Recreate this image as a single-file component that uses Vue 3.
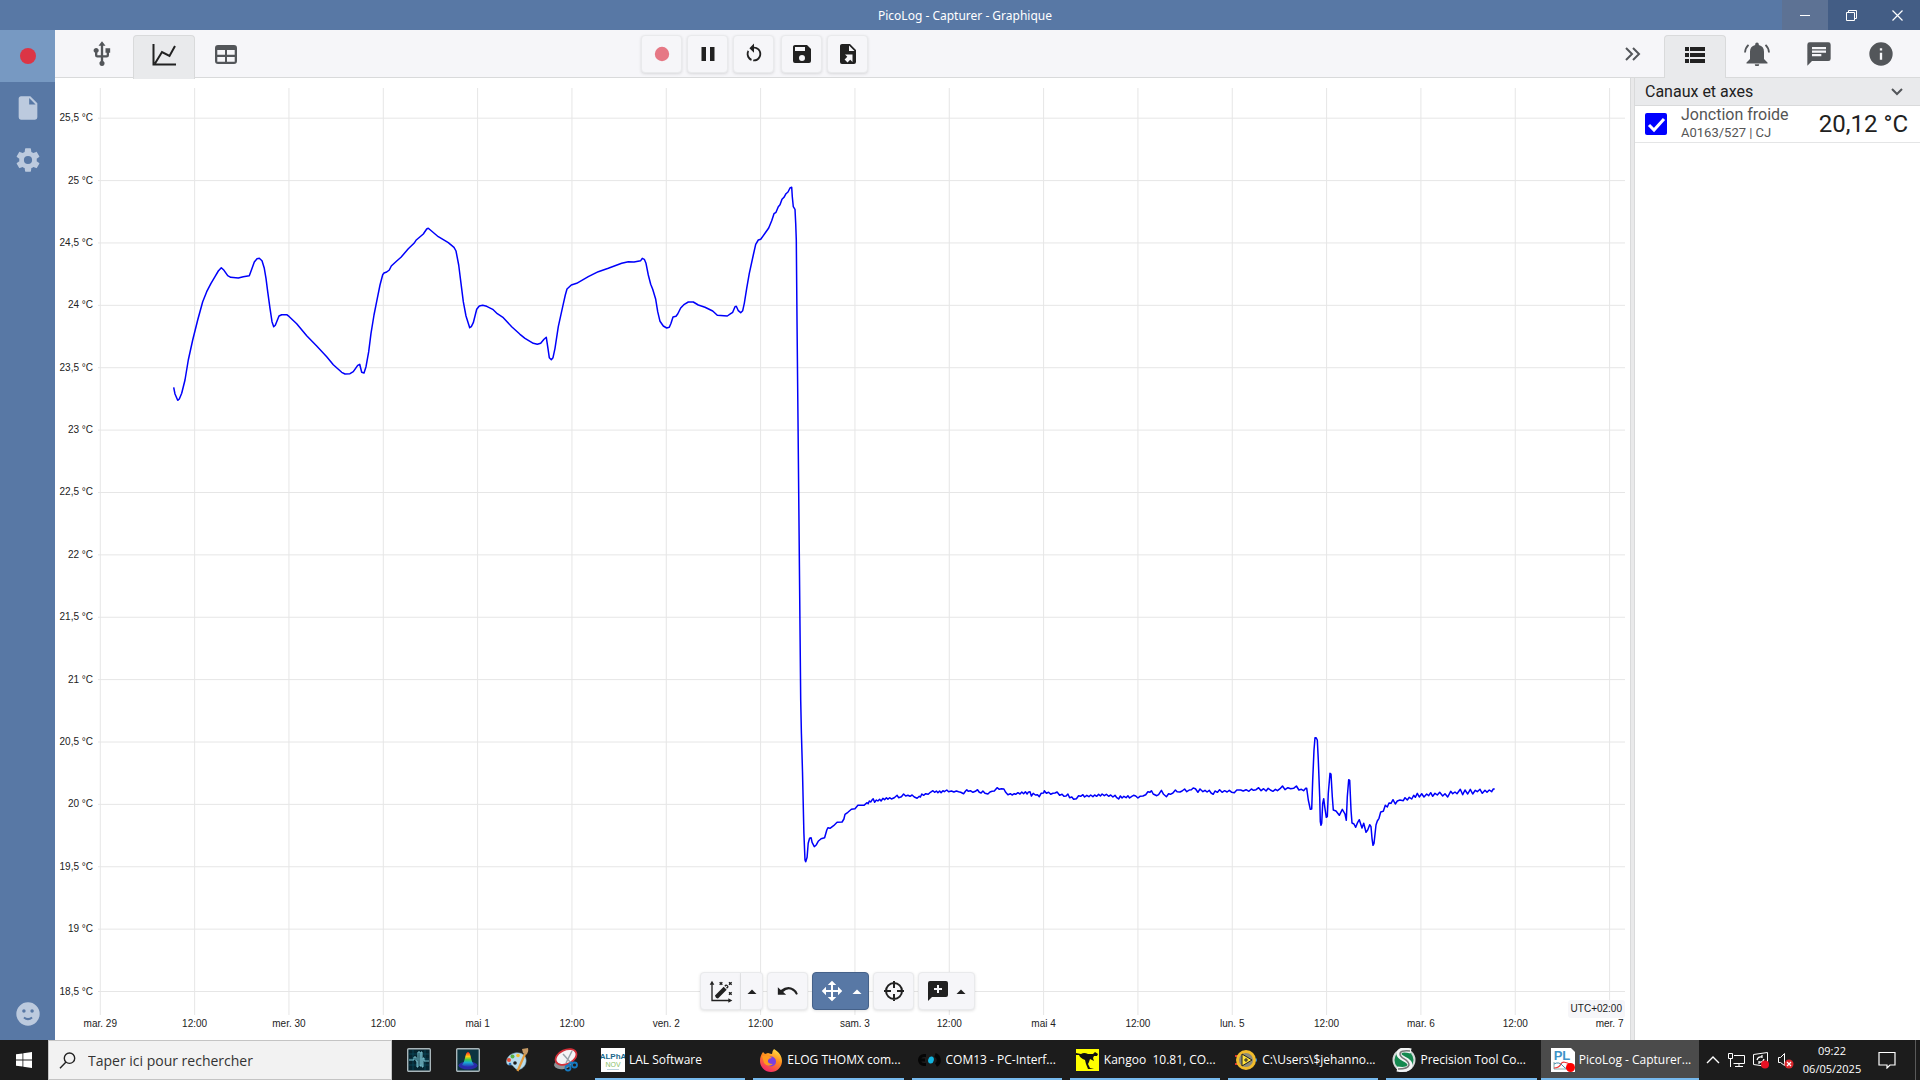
<script setup>
import { h, ref } from 'vue'

const icons = {
  usb: { w: 24, h: 24, d: 'M15,7V11H16V13H13V5H15L12,1L9,5H11V13H8V10.93C8.7,10.56 9.2,9.85 9.2,9C9.2,7.78 8.21,6.8 7,6.8C5.78,6.8 4.8,7.78 4.8,9C4.8,9.85 5.3,10.56 6,10.93V13A2,2 0 0,0 8,15H11V18.05C10.29,18.41 9.8,19.15 9.8,20A2.2,2.2 0 0,0 12,22.2A2.2,2.2 0 0,0 14.2,20C14.2,19.15 13.71,18.41 13,18.05V15H16A2,2 0 0,0 18,13V11H19V7H15Z' },
  file: { w: 24, h: 24, d: 'M13,9V3.5L18.5,9M6,2C4.89,2 4,2.89 4,4V20A2,2 0 0,0 6,22H18A2,2 0 0,0 20,20V8L14,2H6Z' },
  cog: { w: 24, h: 24, d: 'M12,15.5A3.5,3.5 0 0,1 8.5,12A3.5,3.5 0 0,1 12,8.5A3.5,3.5 0 0,1 15.5,12A3.5,3.5 0 0,1 12,15.5M19.43,12.97C19.47,12.65 19.5,12.33 19.5,12C19.5,11.67 19.47,11.34 19.43,11L21.54,9.37C21.73,9.22 21.78,8.95 21.66,8.73L19.66,5.27C19.54,5.05 19.27,4.96 19.05,5.05L16.56,6.05C16.04,5.66 15.5,5.32 14.87,5.07L14.5,2.42C14.46,2.18 14.25,2 14,2H10C9.75,2 9.54,2.18 9.5,2.42L9.13,5.07C8.5,5.32 7.96,5.66 7.44,6.05L4.95,5.05C4.73,4.96 4.46,5.05 4.34,5.27L2.34,8.73C2.21,8.95 2.27,9.22 2.46,9.37L4.57,11C4.53,11.34 4.5,11.67 4.5,12C4.5,12.33 4.53,12.65 4.57,12.97L2.46,14.63C2.27,14.78 2.21,15.05 2.34,15.27L4.34,18.73C4.46,18.95 4.73,19.03 4.95,18.95L7.44,17.94C7.96,18.34 8.5,18.68 9.13,18.93L9.5,21.58C9.54,21.82 9.75,22 10,22H14C14.25,22 14.46,21.82 14.5,21.58L14.87,18.93C15.5,18.67 16.04,18.34 16.56,17.94L19.05,18.95C19.27,19.03 19.54,18.95 19.66,18.73L21.66,15.27C21.78,15.05 21.73,14.78 21.54,14.63L19.43,12.97Z' },
  smile: { w: 24, h: 24, d: 'M12,2A10,10 0 1,0 12,22A10,10 0 1,0 12,2M8.5,8A1.5,1.5 0 1,1 8.5,11A1.5,1.5 0 1,1 8.5,8M15.5,8A1.5,1.5 0 1,1 15.5,11A1.5,1.5 0 1,1 15.5,8M8,15.6L9,14.4Q12,16.6 15,14.4L16,15.6Q12,19 8,15.6Z' },
  chart: { w: 24, h: 24, s: 'M1.5,1V21.5H24M3,20.5L10,9L17.5,13L23,3', sw: 2 },
  table: { w: 22, h: 19, d: 'M3,0H19A3,3 0 0,1 22,3V16A3,3 0 0,1 19,19H3A3,3 0 0,1 0,16V3A3,3 0 0,1 3,0M2.3,5V9.8H10V5M12,5V9.8H19.7V5M2.3,12V16.8H10V12M12,12V16.8H19.7V12Z' },
  record: { w: 20, h: 20, d: 'M10,2A8,8 0 1,0 10,18A8,8 0 1,0 10,2Z' },
  pause: { w: 24, h: 24, d: 'M5.5,5H10V19H5.5ZM14,5H18.5V19H14Z' },
  restart: { w: 24, h: 24, d: 'M12,4C14.1,4 16.1,4.8 17.6,6.3C20.7,9.4 20.7,14.5 17.6,17.6C15.8,19.5 13.3,20.2 10.9,19.9L11.4,17.9C13.1,18.1 14.9,17.5 16.2,16.2C18.5,13.9 18.5,10.1 16.2,7.7C15.1,6.6 13.5,6 12,6V10.6L7,5.6L12,0.6V4M6.3,17.6C3.7,15 3.3,11 5.1,7.9L6.6,9.4C5.5,11.6 5.9,14.4 7.8,16.2C8.3,16.7 8.9,17.1 9.6,17.4L9,19.4C8,19 7.1,18.4 6.3,17.6Z' },
  save: { w: 24, h: 24, d: 'M15,9H5V5H15M12,19A3,3 0 0,1 9,16A3,3 0 0,1 12,13A3,3 0 0,1 15,16A3,3 0 0,1 12,19M17,3H5C3.89,3 3,3.9 3,5V19A2,2 0 0,0 5,21H19A2,2 0 0,0 21,19V7L17,3Z' },
  exportFile: { w: 24, h: 24, d: 'M6,2C4.9,2 4,2.9 4,4V20A2,2 0 0,0 6,22H18A2,2 0 0,0 20,20V8L14,2H6M13,3.5L18.5,9H13V3.5M9,12.5H16.5V20L14.2,17.7L11.5,20.4L8.6,17.5L11.3,14.8L9,12.5Z' },
  chevrons: { w: 18, h: 16, s: 'M2,2L8,8L2,14M9,2L15,8L9,14', sw: 2 },
  list: { w: 20, h: 16, d: 'M0,0H4V4H0ZM5,0H20V4H5ZM0,6H4V10H0ZM5,6H20V10H5ZM0,12H4V16H0ZM5,12H20V16H5Z' },
  bell: { w: 26, h: 24, d: 'M13,0.5A1.8,1.8 0 0,1 14.8,2.3V3A7,7 0 0,1 20,10V17L23.5,20.5V21.5H2.5V20.5L6,17V10A7,7 0 0,1 11.2,3V2.3A1.8,1.8 0 0,1 13,0.5M10.8,22.2H15.2A2.2,2.2 0 0,1 10.8,22.2Z', s: 'M1,10.5Q1.2,6 4.5,2.8M25,10.5Q24.8,6 21.5,2.8', sw: 1.8 },
  chat: { w: 24, h: 24, d: 'M20 2H4A2 2 0 0 0 2 4V22L6 18H20A2 2 0 0 0 22 16V4A2 2 0 0 0 20 2M6 9H18V11H6M14 14H6V12H14M18 8H6V6H18Z' },
  info: { w: 24, h: 24, d: 'M13,9H11V7H13M13,17H11V11H13M12,2A10,10 0 0,0 2,12A10,10 0 0,0 12,22A10,10 0 0,0 22,12A10,10 0 0,0 12,2Z' },
  down: { w: 14, h: 10, s: 'M2,2L7,7L12,2', sw: 2 },
  caret: { w: 10, h: 5, d: 'M0.5,5L5,0.5L9.5,5Z' },
  autoAxes: { w: 72, h: 68, s: 'M9,12V61H60M32,6L40,14M40,6L32,14M60,6L68,14M68,6L60,14M60,36L68,44M68,36L60,44', sw: 4, d: 'M2,14L9,2L16,14ZM58,54L70,61L58,68ZM18,46L44,20L53,29L27,55Q20,55 18,46M46,17L50,13Q53,12 56,15Q60,18 58,22L54,26L51,23L55,19L52,17L49,20Z' },
  undo: { w: 62, h: 30, d: 'M2,4L11,12Q31,-3 50,8Q60,14 62,24L57,26Q52,15 42,11Q29,7 18,18L27,26H2Z' },
  move: { w: 24, h: 24, d: 'M13,6V11H18V7.75L22.25,12L18,16.25V13H13V18H16.25L12,22.25L7.75,18H11V13H6V16.25L1.75,12L6,7.75V11H11V6H7.75L12,1.75L16.25,6H13Z' },
  target: { w: 22, h: 22, s: 'M11,3A8,8 0 1,0 11,19A8,8 0 1,0 11,3M11,1V8M11,14V21M1,11H8M14,11H21', sw: 2 },
  note: { w: 20, h: 20, d: 'M2,0H18A2,2 0 0,1 20,2V14A2,2 0 0,1 18,16H4L0,20V2A2,2 0 0,1 2,0M9,4V7H6V9H9V12H11V9H14V7H11V4Z' },
  check: { w: 22, h: 22, s: 'M4,12L9,17L19,6', sw: 3 },
  minimize: { w: 11, h: 11, s: 'M0,5.5H10', sw: 1 },
  restore: { w: 11, h: 11, s: 'M0.5,2.5H8.5V10.5H0.5ZM2.5,2.5V0.5H10.5V8.5H8.5', sw: 1 },
  close: { w: 11, h: 11, s: 'M0.5,0.5L10.5,10.5M10.5,0.5L0.5,10.5', sw: 1.2 },
  windows: { w: 16, h: 16, d: 'M0,2.3L6.5,1.4V7.6H0ZM7.3,1.3L16,0V7.6H7.3ZM0,8.4H6.5V14.6L0,13.7ZM7.3,8.4H16V16L7.3,14.7Z' },
  search: { w: 17, h: 17, s: 'M10.5,1A5.2,5.2 0 1,0 10.5,11.4A5.2,5.2 0 1,0 10.5,1M7,10L1,16.3', sw: 1.4 },
  up: { w: 14, h: 10, s: 'M1,8L7,2L13,8', sw: 1.4 },
  notify: { w: 18, h: 18, s: 'M1,1.5H17V14H12L9,17V14H1Z', sw: 1.2 }
}

const Icon = (props) => {
  const i = icons[props.name]
  return h('svg', { class: 'icon', width: props.width, height: props.height || props.width, viewBox: `0 0 ${i.w} ${i.h}`, 'aria-hidden': 'true' }, [
    i.d && h('path', { d: i.d, fill: 'currentColor', 'fill-rule': 'evenodd' }),
    i.s && h('path', { d: i.s, fill: 'none', stroke: 'currentColor', 'stroke-width': i.sw })
  ])
}
Icon.props = ['name', 'width', 'height']

const channelOn = ref(true)

const yTicks = Array.from({ length: 15 }, (_, i) => ({
  label: String(25.5 - i * 0.5).replace('.', ',') + ' °C',
  y: 118.2 + i * 62.38
}))
const days = ['mar. 29', 'mer. 30', 'mai 1', 'ven. 2', 'sam. 3', 'mai 4', 'lun. 5', 'mar. 6', 'mer. 7']
const xTicks = Array.from({ length: 17 }, (_, i) => ({
  label: i % 2 ? '12:00' : days[i / 2],
  x: 100.3 + i * 94.33
}))

// Recorded trace, kept in blocks: origin on the plot, units per pixel, then x,y pairs.
const blocks = [
  { o: [160, 180], k: [3, 3], p: '41 622,45 642,53 661,58 657,65 640,75 600,85 540,98 480,113 420,128 365,140 335,153 310,165 290,175 273,184 263,192 271,203 287,212 292,235 294,250 290,268 287,275 268,283 246,291 236,298 235,306 242,313 265,318 295,323 335,330 385,336 425,341 440,346 436,357 408,365 404,380 404,388 410,410 431,440 467,470 498,500 530,520 554,545 577,555 582,570 581,580 575,593 556,599 553,605 577,612 579,618 560,626 515,633 460,642 405,652 355,660 315,668 284,672 279,680 276,688 270,694 258,710 243,723 232,745 206,762 190,768 181,790 162,800 147,805 145,835 170,865 188,882 202,888 213,896 255,903 310,910 365,918 408,929 443,934 440,940 428,950 388,958 378' },
  { o: [480, 180], k: [3, 3], p: '8 376,20 379,38 388,52 401,70 413,95 440,120 463,135 475,160 490,172 493,182 490,192 478,199 472,203 500,208 533,214 539,219 533,225 505,235 440,248 380,256 345,261 327,274 315,290 310,325 290,355 275,385 265,425 250,445 245,462 246,482 242,487 235,493 238,498 250,505 285,512 313,518 328,527 358,533 395,540 424,550 438,560 444,568 442,573 430,579 411,588 409,593 402,602 384,613 373,625 366,640 366,655 375,675 382,698 393,712 406,742 408,752 401,758 397,765 380,769 379,775 392,782 398,788 392,793 370,800 325,808 280,820 225,827 193,835 180,842 178,855 160,866 144,875 122,882 101,888 97,895 80,900 74,906 58,912 52,918 41,924 36,930 24,935 22,937 50,940 80,945 88,947 130,949 180,951 420,954 720' },
  { o: [780, 700], k: [2.8, 3], p: '58 0,60 100,63 215,67 400,70 480,72 485,76 472,79 430,83 415,87 413,90 427,96 440,102 434,107 424,115 416,125 413,131 390,134 383,140 385,150 377,160 367,174 366,179 357,182 343,190 337,200 328,210 326,218 316,235 316,244 308,247 311,250 303,254 306,257 301,261 296,265 307,270 300,274 303,279 298,283 303,288 295,293 299,298 293,302 298,307 293,312 297,320 293,328 286,332 293,340 290,346 282,352 288,358 286,364 289,370 285,376 291,384 295,390 289,393 291,397 282,402 286,408 281,415 283,421 277,428 272,433 277,438 273,442 278,447 273,451 278,456 272,460 275,467 270,472 275,480 273,487 276,494 273,500 275,506 277,514 281,519 274,523 269,527 274,533 272,540 277,547 274,553 269,558 277,563 279,568 273,574 280,582 282,588 276,594 274,600 273,608 263,614 268,620 266,627 267,632 277,638 284,645 281,650 285,656 281,660 283,666 278,672 282,677 276,682 281,687 275,692 282,695 277,700 275,704 288,709 280,715 285,721 284,726 290,731 280,738 279,740 272,746 280,752 277,758 283,764 280,770 279,776 276,783 286,790 283,795 289,801 288,806 282,811 293,817 291,822 298,830 296,836 287,842 289,848 284,853 291,859 286,865 290,870 285,876 290,881 285,887 289,892 283,897 288,902 282,908 287,914 283,920 289,926 285,932 291,938 286,943 293,948 297,953 288,958 294,963 289,969 293,974 287,979 294,985 289,990 286,996 288,1002 294,1008 289,1016 288,1024 284,1030 275,1036 277,1040 272,1045 282,1055 287,1060 284,1068 271,1074 283,1082 290,1088 281,1093 283,1100 279,1107 270,1112 275,1120 276,1126 273,1133 267,1139 275,1146 270,1152 269,1157 264,1163 266,1170 277,1176 267,1184 275,1190 271,1196 276,1202 271,1207 279,1213 283,1218 273,1225 277,1231 269,1238 277,1245 272,1252 276,1258 271,1265 277,1272 278,1279 270,1290 270,1297 273,1305 269,1313 274,1320 267,1326 271,1333 269,1340 263,1347 272,1354 266,1361 273,1367 265,1373 270,1380 274,1387 268,1393 272,1400 266,1407 258,1414 269,1422 263,1430 266,1438 265,1446 258,1453 270,1460 268,1466 272,1472 265' },
  { o: [1280, 700], k: [3, 3], p: '80 265,85 300,91 328,95 327,98 240,102 150,105 113,108 113,112 120,115 180,119 290,121 365,123 376,125 370,128 310,131 296,134 320,139 352,142 350,145 280,150 220,153 222,157 290,160 330,168 333,178 346,187 328,195 342,199 361,202 290,206 239,209 241,213 330,216 369,222 372,227 382,233 367,238 359,246 384,251 370,258 397,263 390,269 374,273 380,276 415,279 436,282 430,288 375,292 363,297 355,302 336,310 334,316 316,322 321,327 309,333 310,339 299,346 312,352 303,360 300,370 302,375 293,382 300,388 292,395 297,401 286,406 292,412 280,418 291,425 281,432 291,440 282,446 287,452 278,458 289,465 280,472 285,479 277,488 288,495 281,503 291,512 274,518 281,525 276,531 281,541 268,548 284,555 270,563 282,571 268,578 282,586 271,592 275,600 268,607 280,615 271,621 277,628 270,635 275,640 267,644 267' }
]
const trace = blocks.flatMap(({ o, k, p }) => p.split(',').map((pair) => {
  const [x, y] = pair.split(' ').map(Number)
  return `${(o[0] + x / k[0]).toFixed(1)},${(o[1] + y / k[1]).toFixed(1)}`
})).join(' ')

const tasks = ['LAL Software', 'ELOG THOMX com...', 'COM13 - PC-Interf...', 'Kangoo  10.81, CO...', 'C:\\Users\\$jehanno...', 'Precision Tool Co...', 'PicoLog - Capturer...']
</script>

<template>
  <div class="app">
    <header class="titlebar">
      <h1 class="title">PicoLog - Capturer - Graphique</h1>
      <div class="window-buttons">
        <button class="win min" aria-label="Réduire"><Icon name="minimize" width="11" /></button>
        <button class="win" aria-label="Restaurer"><Icon name="restore" width="11" /></button>
        <button class="win" aria-label="Fermer"><Icon name="close" width="11" /></button>
      </div>
    </header>

    <div class="body">
      <nav class="sidebar">
        <button class="side active" aria-label="Capturer"><Icon name="record" width="20" /></button>
        <button class="side" aria-label="Fichier"><Icon name="file" width="28" /></button>
        <button class="side" aria-label="Paramètres"><Icon name="cog" width="28" /></button>
        <button class="side last" aria-label="Commentaires"><Icon name="smile" width="28" /></button>
      </nav>

      <div class="workspace">
        <div class="toolbar">
          <div class="tabs left">
            <button class="tab" aria-label="Appareils"><Icon name="usb" width="28" /></button>
            <button class="tab current" aria-label="Graphique"><Icon name="chart" width="24" /></button>
            <button class="tab" aria-label="Tableau"><Icon name="table" width="22" height="19" /></button>
          </div>
          <div class="actions">
            <button class="tool rec" aria-label="Enregistrer"><Icon name="record" width="18" /></button>
            <button class="tool" aria-label="Pause"><Icon name="pause" width="24" /></button>
            <button class="tool" aria-label="Recommencer"><Icon name="restart" width="22" /></button>
            <button class="tool spaced" aria-label="Sauvegarder"><Icon name="save" width="24" /></button>
            <button class="tool" aria-label="Exporter"><Icon name="exportFile" width="24" /></button>
          </div>
          <div class="tabs right">
            <button class="tab" aria-label="Masquer"><Icon name="chevrons" width="18" height="16" /></button>
            <button class="tab current" aria-label="Canaux"><Icon name="list" width="20" height="16" /></button>
            <button class="tab" aria-label="Alarmes"><Icon name="bell" width="26" height="24" /></button>
            <button class="tab" aria-label="Notes"><Icon name="chat" width="28" /></button>
            <button class="tab" aria-label="Informations"><Icon name="info" width="28" /></button>
          </div>
        </div>

        <div class="content">
          <main class="chart">
            <svg class="plot" viewBox="55 78 1575 962" role="img" aria-label="Jonction froide">
              <g class="grid">
                <line v-for="t in xTicks" :key="'x' + t.x" :x1="t.x" :x2="t.x" y1="88" y2="1015" />
                <line v-for="t in yTicks" :key="'y' + t.y" :y1="t.y" :y2="t.y" x1="98" x2="1625" />
              </g>
              <polyline v-if="channelOn" class="trace" :points="trace" />
              <g class="labels">
                <text v-for="t in yTicks" :key="'yl' + t.y" x="93" :y="t.y + 3" text-anchor="end">{{ t.label }}</text>
                <text v-for="t in xTicks" :key="'xl' + t.x" :x="t.x" y="1027" text-anchor="middle">{{ t.label }}</text>
              </g>
            </svg>
            <span class="zone">UTC+02:00</span>
            <div class="graph-tools">
              <div class="split">
                <button class="tool" aria-label="Échelle automatique"><Icon name="autoAxes" width="24" height="23" /></button>
                <button class="tool arrow" aria-label="Options d'échelle"><Icon name="caret" width="10" height="5" /></button>
              </div>
              <button class="tool" aria-label="Annuler"><Icon name="undo" width="21" height="10" /></button>
              <button class="tool wide selected" aria-label="Déplacer"><Icon name="move" width="24" /><Icon name="caret" width="10" height="5" /></button>
              <button class="tool" aria-label="Centrer"><Icon name="target" width="22" /></button>
              <button class="tool wide" aria-label="Ajouter une note"><Icon name="note" width="20" /><Icon name="caret" width="10" height="5" /></button>
            </div>
          </main>

          <div class="splitter"></div>

          <aside class="panel">
            <button class="panel-head"><span>Canaux et axes</span><Icon name="down" width="14" height="10" /></button>
            <label class="channel">
              <span class="box">
                <input v-model="channelOn" type="checkbox" />
                <Icon v-if="channelOn" name="check" width="22" />
              </span>
              <span class="names">
                <span class="name">Jonction froide</span>
                <span class="source">A0163/527 | CJ</span>
              </span>
              <span class="value">20,12 °C</span>
            </label>
          </aside>
        </div>
      </div>
    </div>

    <footer class="taskbar">
      <button class="start" aria-label="Démarrer"><Icon name="windows" width="16" /></button>
      <label class="search">
        <Icon name="search" width="17" />
        <input type="text" placeholder="Taper ici pour rechercher" aria-label="Rechercher" />
      </label>
      <div class="pinned">
        <button class="pin" aria-label="Signal">
          <svg width="24" height="24" viewBox="0 0 24 24">
            <rect x=".7" y=".7" width="22.6" height="22.6" rx="1" fill="#06242f" stroke="#a9b6ba" stroke-width="1.4" />
            <path d="M2 6H22M2 11H22M2 17H22M6 2V22M18 2V22" stroke="#0b4a5c" stroke-width=".8" />
            <path d="M2 12H7V9H9V13H10V19H11V4H13V18H14V4H15V19H16V10H17V13H22" fill="none" stroke="#7cc6d4" stroke-width="1" />
          </svg>
        </button>
        <button class="pin" aria-label="Profil">
          <svg width="24" height="24" viewBox="0 0 24 24">
            <defs>
              <linearGradient id="peak" x1="0" y1="0" x2="0" y2="1">
                <stop offset="0" stop-color="#f22" /><stop offset=".3" stop-color="#fc1" /><stop offset=".5" stop-color="#4c4" /><stop offset=".7" stop-color="#1aa8d0" /><stop offset="1" stop-color="#2828b8" />
              </linearGradient>
            </defs>
            <rect x=".7" y=".7" width="22.6" height="22.6" rx="1" fill="#0c3440" stroke="#a9b6ba" stroke-width="1.4" />
            <ellipse cx="12" cy="17.5" rx="9.500" ry="4" fill="#2a2aa8" />
            <path d="M12 4Q14 4 15 10Q16 15 18 17Q12 21 6 17Q8 15 9 10Q10 4 12 4Z" fill="url(#peak)" />
          </svg>
        </button>
        <button class="pin" aria-label="Dessin">
          <svg width="24" height="24" viewBox="0 0 24 24">
            <path d="M10 5C17 4 22 8 21 14C20 20 14 23 11 21C8 19 8 16 4 17C0 17 0 7 10 5Z" fill="#b9dcec" stroke="#7ba8bd" stroke-width=".6" />
            <circle cx="4" cy="12" r="2" fill="#e84b35" /><circle cx="7.500" cy="8.500" r="2" fill="#57b347" /><circle cx="13" cy="7.500" r="1.800" fill="#f4bb2e" /><circle cx="5" cy="16" r="1.300" fill="#2675c9" />
            <circle cx="10" cy="15" r="1.800" fill="#1c1c1c" />
            <path d="M20 6L12.500 23" stroke="#e29a3c" stroke-width="2.200" />
            <path d="M17 1L23 0Q24 4 21 7L18 5Z" fill="#c59a66" />
          </svg>
        </button>
        <button class="pin" aria-label="Capture">
          <svg width="24" height="24" viewBox="0 0 24 24">
            <ellipse cx="9" cy="16" rx="9" ry="5" fill="#8d9499" transform="rotate(-10 9 16)" />
            <ellipse cx="12" cy="9" rx="11" ry="7" fill="#f4f4f6" stroke="#d33039" stroke-width="1.8" transform="rotate(-25 12 9)" />
            <path d="M18 3L12 15M9 6L17 15" stroke="#9aa3ab" stroke-width="1.5" />
            <g fill="none" stroke="#1779bf" stroke-width="1.8"><circle cx="14" cy="20" r="2.500" /><circle cx="20.500" cy="17" r="2.500" /><path d="M14 17L18 14" /></g>
          </svg>
        </button>
      </div>
      <div class="tasks">
        <button v-for="(t, i) in tasks" :key="t" class="task" :class="{ front: i === 6 }">
          <svg width="24" height="24" viewBox="0 0 24 24" aria-hidden="true">
            <g v-if="i === 0">
              <rect width="24" height="24" fill="#fff" />
              <text x="12" y="11" class="logo-alpha" text-anchor="middle">ALPhA</text>
              <text x="12" y="19" class="logo-nov" text-anchor="middle">NOV</text>
              <path d="M6 21.500H18" stroke="#a9c8d4" stroke-width=".8" />
            </g>
            <g v-else-if="i === 1">
              <defs><linearGradient id="fox" x1=".8" y1="0" x2=".3" y2="1"><stop offset="0" stop-color="#ffe648" /><stop offset=".45" stop-color="#ff8a1c" /><stop offset="1" stop-color="#f5246e" /></linearGradient></defs>
              <path d="M15 1C20 4 23 8 23 13A11 11 0 0 1 1 13C1 9 2 7 4 4L6 6L9 5Q12 6 13 6Q13 3 15 1Z" fill="url(#fox)" />
              <circle cx="12" cy="13.500" r="5" fill="#7a3fe0" />
              <path d="M3 8Q9 6 13 10Q10 10 9 12Q8 16 14 16Q9 20 5 15Z" fill="#ff9a1f" />
            </g>
            <g v-else-if="i === 2">
              <path d="M8 7.500H6A4.500 4.500 0 0 0 6 16.500H8M2 12H7" fill="none" stroke="#050505" stroke-width="3" />
              <path d="M17 7A5.500 5.500 0 0 1 18 17" fill="none" stroke="#050505" stroke-width="4" />
              <ellipse cx="13" cy="12" rx="2.800" ry="3.600" fill="#12b5e0" transform="rotate(15 13 12)" />
            </g>
            <g v-else-if="i === 3">
              <rect y="1" width="23" height="22" fill="#ff0" />
              <path d="M19 4L22 6L21 8L18 8L17 10L18 13L16 12L14 11L13 14L12 16L14 20L18 21H12L10 16L9 12Q4 10 3 7L0 7V5L5 6Q8 4 12 6L17 6Z" fill="#111" />
            </g>
            <g v-else-if="i === 4">
              <path d="M1 8H7M1 16H7" stroke="#d33" stroke-width="2" /><path d="M16 12H23" stroke="#2b7fd0" stroke-width="3" />
              <circle cx="12" cy="12" r="8.500" fill="#8a8a7a" stroke="#f0bb2b" stroke-width="3" />
              <path d="M8 6L18 12L8 18Z" fill="#ffe23a" stroke="#222" /><path d="M10 12H14M12 10V14" stroke="#222" />
            </g>
            <g v-else-if="i === 5">
              <circle cx="12" cy="12" r="11.500" fill="#d4d8d8" />
              <circle cx="12" cy="12" r="9.500" fill="#15884f" />
              <path d="M19 3Q7 0 7 6C7 11 18 11 18 17Q17 23 5 21" fill="none" stroke="#f2f4f4" stroke-width="5" />
              <path d="M18 3Q8 2 8 6C8 11 17 11 17 17Q16 21 6 21" fill="none" stroke="#777" stroke-width="1.500" />
            </g>
            <g v-else>
              <path d="M0 0H20L24 4V24H0Z" fill="#fff" />
              <text x="11" y="12" class="logo-pl" text-anchor="middle">PL</text>
              <path d="M3 14V21H21" fill="none" stroke="#8aa" /><path d="M3 20Q8 20 10 16T20 17" fill="none" stroke="#e33" stroke-width="1.200" /><path d="M3 16Q8 13 12 18T21 19" fill="none" stroke="#48a" />
              <circle cx="19.500" cy="19.500" r="4.500" fill="#f00" />
            </g>
          </svg>
          <span class="task-name">{{ t }}</span>
        </button>
      </div>
      <div class="tray">
        <button class="tray-icon" aria-label="Icônes cachées"><Icon name="up" width="14" height="10" /></button>
        <button class="tray-icon" aria-label="Réseau">
          <svg width="18" height="16" viewBox="0 0 18 16" fill="none" stroke="#fff"><path d="M6 3.500H16.500V11.500H5.500M11 11.500V14.500M7 14.500H15M2.500 7V15" /><path d="M.5 1.500H4.500V6.500H.5Z" /></svg>
        </button>
        <button class="tray-icon" aria-label="Synchronisation">
          <svg width="18" height="18" viewBox="0 0 18 18"><path d="M1.500 3.500L15.500 1.500V15.500L1.500 13.500Z" fill="none" stroke="#fff" /><path d="M5 9Q6 5 10 6M12 8Q11 12 7 11M10 4V7M7 13V10" fill="none" stroke="#fff" stroke-width="1.200" /><circle cx="13" cy="13.500" r="4" fill="#e81123" /></svg>
        </button>
        <button class="tray-icon" aria-label="Volume">
          <svg width="18" height="18" viewBox="0 0 18 18"><path d="M2.500 6.500H4.500L8.500 2.500V14.500L4.500 11.500H2.500Z" fill="none" stroke="#fff" /><circle cx="13" cy="13" r="4.500" fill="#d9262c" /><path d="M11 11L15 15M15 11L11 15" stroke="#fff" stroke-width="1.200" /></svg>
        </button>
        <div class="clock"><time>09:22</time><time>06/05/2025</time></div>
        <button class="notify" aria-label="Notifications"><Icon name="notify" width="18" /></button>
        <button class="desktop" aria-label="Afficher le bureau"></button>
      </div>
    </footer>
  </div>
</template>

<style>
body { margin: 0; }
</style>

<style scoped>
* { box-sizing: border-box; }
button { border: 0; padding: 0; margin: 0; background: none; color: inherit; font: inherit; display: flex; align-items: center; justify-content: center; }
.icon { display: block; flex: none; }
.app { min-height: 100vh; display: flex; flex-direction: column; font-family: Roboto, "Liberation Sans", sans-serif; color: #212121; background: #fff; }

.titlebar { height: 30px; background: #5878a5; color: #fff; position: relative; display: flex; align-items: center; justify-content: center; }
.title { margin: 0; padding: 2px 0 0 10px; font: 12px/16px "Noto Sans", "Open Sans", sans-serif; }
.window-buttons { position: absolute; right: 0; top: 0; display: flex; height: 30px; background: #435d85; }
.win { width: 46px; }
.win.min { background: #5d7294; }

.body { flex: 1; display: flex; }
.sidebar { width: 55px; flex: none; background: #5878a5; display: flex; flex-direction: column; }
.side { height: 52px; color: #bccade; }
.side.active { background: #7799c2; color: #dc3545; }
.side.last { margin-top: auto; }

.workspace { flex: 1; min-width: 0; display: flex; flex-direction: column; }
.toolbar { height: 48px; background: #f6f6f9; border-bottom: 1px solid #d9dadb; display: flex; align-items: flex-start; padding-top: 5px; }
.tabs { display: flex; flex: none; }
.tabs.left { padding-left: 16px; }
.tabs.right { padding-right: 8px; }
.tab { width: 62px; height: 38px; color: #53565a; }
.tab.current { height: 44px; padding-bottom: 6px; background: #e9eaec; border: 1px solid #d9dadb; border-bottom: 0; border-radius: 4px 4px 0 0; color: #212121; }
.actions { flex: 1; display: flex; gap: 5px; }
.actions::before { content: ""; flex: 13; }
.actions::after { content: ""; flex: 25; }
.tool { width: 41px; height: 38px; background: #f6f6f9; border: 1px solid #e9eaec; border-radius: 4px; box-shadow: 0 1px 3px rgba(0, 0, 0, .12); color: #212121; }
.tool.rec { color: #e67885; }
.tool.spaced { margin-left: 2px; }

.content { flex: 1; display: flex; }
.chart { flex: 1; min-width: 0; position: relative; }
.plot { display: block; width: 100%; height: auto; }
.grid line { stroke: #e6e6e6; stroke-width: 1; }
.trace { fill: none; stroke: #0000fa; stroke-width: 1.5; stroke-linejoin: round; }
.labels { font: 10px "Liberation Sans", sans-serif; fill: #222; }
.zone { position: absolute; right: 5px; bottom: 22px; padding: 0 3px; border-radius: 3px; background: #f6f6f9; font: 10px/18px "Liberation Sans", sans-serif; }
.graph-tools { position: absolute; left: 0; right: 10px; bottom: 30px; display: flex; justify-content: center; gap: 4px; pointer-events: none; }
.graph-tools .tool { pointer-events: auto; }
.split { display: flex; }
.split .tool:first-child { border-radius: 4px 0 0 4px; }
.split .arrow { width: 22px; border-left: 0; border-radius: 0 4px 4px 0; }
.tool.wide { width: 57px; gap: 8px; }
.tool.selected { background: #5878a5; border-color: #456189; color: #fff; }

.splitter { width: 5px; background: #e9e9ea; border: 1px solid #d9dadb; border-width: 0 1px; }
.panel { width: 285px; flex: none; }
.panel-head { width: 100%; height: 28px; padding: 0 16px 0 10px; justify-content: space-between; background: #e9eaec; border-bottom: 1px solid #d9dadb; font-size: 16px; line-height: 26px; color: #212121; }
.panel-head .icon { color: #53565a; }
.channel { display: flex; align-items: center; height: 37px; padding: 0 12px 0 10px; border-bottom: 1px solid #e4e5e6; }
.box { position: relative; width: 22px; height: 22px; background: #00f; border-radius: 2px; color: #fff; }
.box input { position: absolute; inset: 0; width: 22px; height: 22px; margin: 0; opacity: 0; }
.names { display: flex; flex-direction: column; padding: 0 0 1px 14px; color: #555; }
.name { font-size: 16px; line-height: 18px; }
.source { font-size: 13px; line-height: 17px; }
.value { margin-left: auto; font-size: 24px; line-height: 36px; }

.taskbar { height: 40px; background: #1c1c1c; color: #fff; display: flex; font: 12px/16px "Open Sans", "Noto Sans", sans-serif; }
.start { width: 48px; flex: none; }
.search { width: 344px; display: flex; align-items: center; gap: 12px; padding: 0 10px; background: #f2f2f2; border: 1px solid #c4c4c4; color: #222; }
.search input { flex: 1; min-width: 0; padding: 2px 0 0; border: 0; outline: 0; background: none; color: #222; font: 14px/20px "Open Sans", "Noto Sans", sans-serif; }
.search input::placeholder { color: #333; opacity: 1; }
.pinned { display: flex; padding: 0 1px 0 2px; flex: none; }
.pin { width: 49px; }
.tasks { flex: 1; min-width: 0; display: flex; }
.task { flex: 1; min-width: 0; position: relative; padding-left: 10px; gap: 4px; justify-content: flex-start; }
.task svg { flex: none; }
.task::after { content: ""; position: absolute; left: 4px; right: 4px; bottom: 0; height: 2px; background: #76b9ed; }
.task.front { background: #4b4b4b; }
.task.front::after { left: 0; right: 0; }
.task-name { white-space: pre; overflow: hidden; }
.logo-alpha { font: bold 8px "Liberation Sans", sans-serif; fill: #17678c; }
.logo-nov { font: 7px "Liberation Sans", sans-serif; fill: #8cc168; }
.logo-pl { font: bold 13px "Liberation Sans", sans-serif; fill: #3f93c8; }
.tray { flex: none; display: flex; padding-left: 2px; }
.tray-icon { width: 24px; }
.clock { width: 70px; display: flex; flex-direction: column; align-items: center; justify-content: center; font-size: 11px; line-height: 18px; }
.notify { width: 40px; }
.desktop { width: 13px; background: linear-gradient(#5a5a5a, #5a5a5a) 8px 0 / 1px 100% no-repeat; }
</style>
